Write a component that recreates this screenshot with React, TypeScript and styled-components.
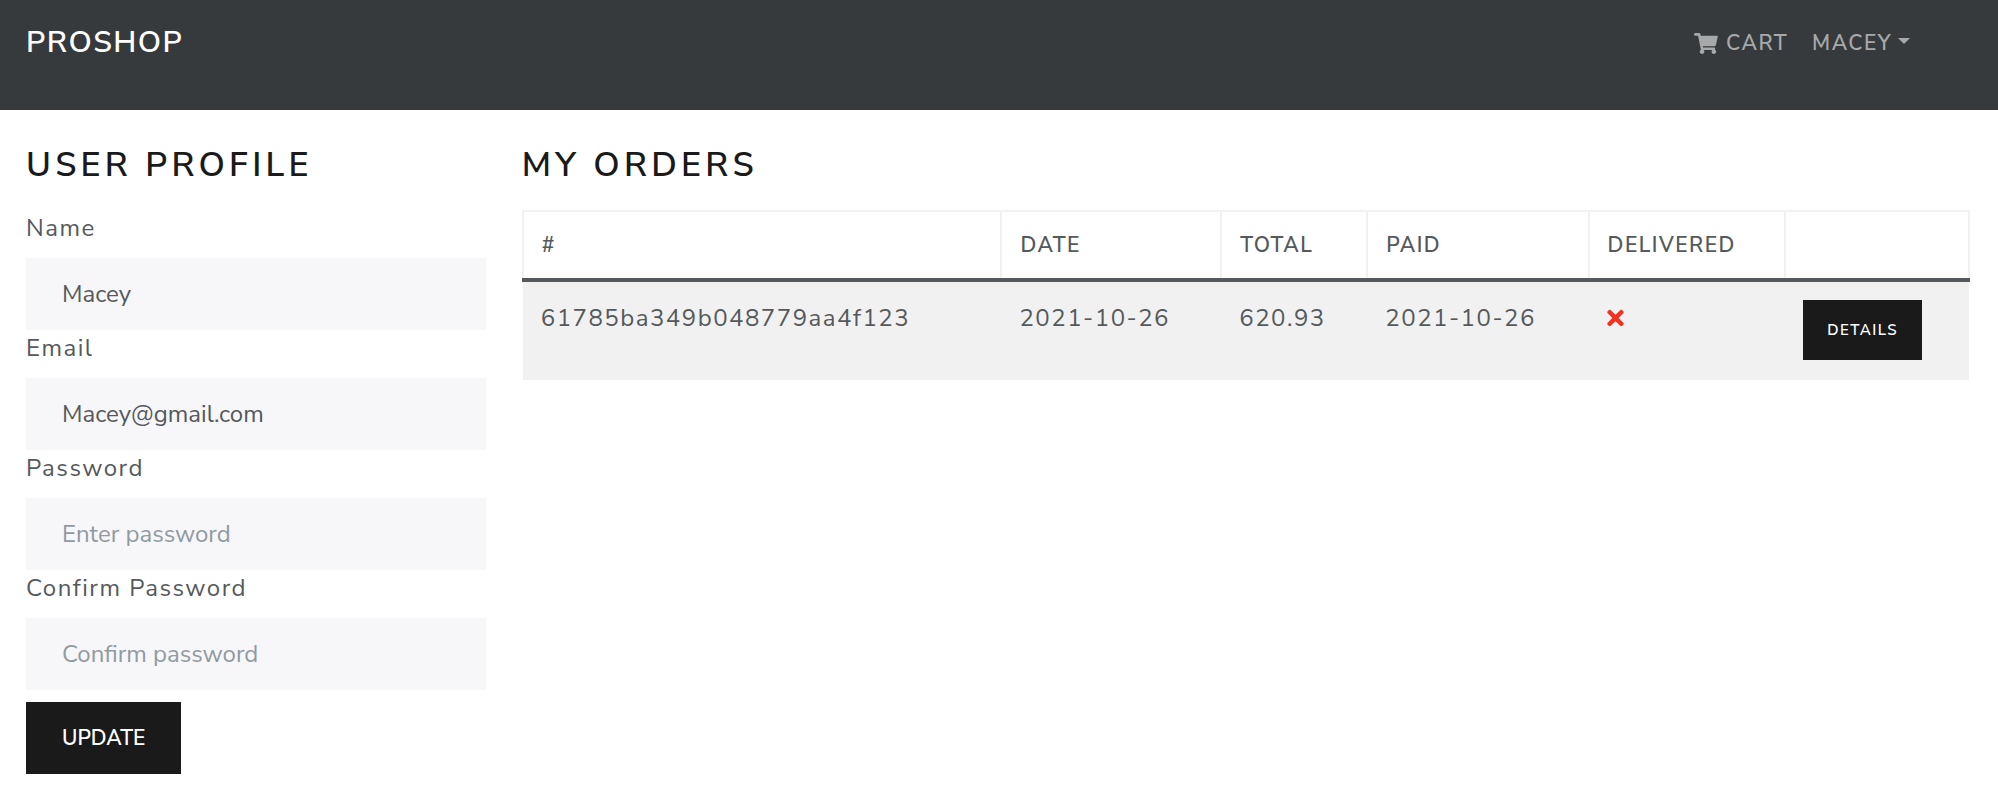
import React from 'react';
import styled, { createGlobalStyle } from 'styled-components';
import { FaShoppingCart, FaTimes } from 'react-icons/fa';

const GlobalStyle = createGlobalStyle`
  *, *::before, *::after { box-sizing: border-box; }
  body {
    margin: 0;
    background: #fff;
    color: #55595c;
    font-family: 'Nunito Sans', Nunito, Lato, sans-serif;
    font-size: 24px;
    line-height: 36px;
    letter-spacing: 0.0625em;
  }
`;

const Navbar = styled.header`
  display: flex;
  justify-content: space-between;
  align-items: flex-start;
  min-height: 110px;
  padding: 25px 88px 0 26px;
  background: #363a3d;
`;

const Brand = styled.a`
  color: #fff;
  font-size: 30px;
  font-weight: 600;
  text-decoration: none;
  text-transform: uppercase;
`;

const NavLinks = styled.nav`
  display: flex;
  gap: 24px;
`;

const navItem = `
  display: flex;
  align-items: center;
  padding: 0;
  border: 0;
  background: none;
  color: #a6a8a9;
  font-family: inherit;
  font-size: 21px;
  font-weight: 600;
  line-height: 36px;
  letter-spacing: inherit;
  text-decoration: none;
  text-transform: uppercase;
  cursor: pointer;
`;

const NavLink = styled.a`
  ${navItem}
  gap: 8px;
`;

const NavToggle = styled.button`
  ${navItem}
  gap: 6px;
`;

const CartIcon = styled(FaShoppingCart)`
  width: 24px;
  height: 21px;
`;

const Caret = styled.span`
  margin-bottom: 4px;
  border-top: 6px solid currentColor;
  border-right: 6px solid transparent;
  border-left: 6px solid transparent;
`;

const Content = styled.main`
  display: grid;
  grid-template-columns: 1fr 3.15fr;
  gap: 36px;
  padding: 33px 28px 30px 26px;
`;

const Column = styled.section`
  min-width: 0;
`;

const Heading = styled.h2`
  margin: 0 0 23px;
  color: #1a1a1a;
  font-size: 34px;
  font-weight: 600;
  line-height: 44px;
  letter-spacing: 0.125em;
  text-transform: uppercase;
`;

const Form = styled.form`
  display: flex;
  flex-direction: column;
  align-items: flex-start;
`;

const Field = styled.div`
  width: 100%;
`;

const Label = styled.label`
  display: block;
  margin-bottom: 12px;
`;

const Input = styled.input`
  display: block;
  width: 100%;
  height: 72px;
  padding: 0 36px;
  border: 0;
  border-radius: 0;
  background: #f7f7f9;
  color: #55595c;
  font: inherit;
  letter-spacing: normal;
  &::placeholder { color: #919aa1; opacity: 1; }
`;

const Button = styled.button<{ $small?: boolean }>`
  display: block;
  height: ${p => (p.$small ? 60 : 72)}px;
  padding: 0 ${p => (p.$small ? 24 : 36)}px;
  border: 0;
  background: #1a1a1a;
  color: #fff;
  font-family: inherit;
  font-size: ${p => (p.$small ? 15 : 21)}px;
  font-weight: 600;
  letter-spacing: ${p => (p.$small ? 'inherit' : 'normal')};
  text-transform: uppercase;
  cursor: pointer;
`;

const FormAction = styled.div`
  margin-top: 12px;
`;

const Table = styled.table`
  width: 100%;
  border-collapse: collapse;
  table-layout: fixed;
`;

const Col = styled.col<{ $width: string }>`
  width: ${p => p.$width};
`;

const HeadCell = styled.th`
  height: 69px;
  padding: 0 18px;
  border: 2px solid #f1f1f1;
  border-bottom: 4px solid #55595c;
  font-size: 21px;
  font-weight: 600;
  text-align: left;
`;

const Row = styled.tr`
  background: #f1f1f1;
`;

const Cell = styled.td`
  height: 100px;
  padding: 18px;
  vertical-align: top;
`;

const Cross = styled(FaTimes)`
  display: block;
  width: 17px;
  height: 24px;
  margin-top: 6px;
  color: #f03322;
`;

const fields = [
  { id: 'name', label: 'Name', type: 'text', value: 'Macey', placeholder: 'Enter name' },
  { id: 'email', label: 'Email', type: 'email', value: 'Macey@gmail.com', placeholder: 'Enter email' },
  { id: 'password', label: 'Password', type: 'password', value: '', placeholder: 'Enter password' },
  { id: 'confirm', label: 'Confirm Password', type: 'password', value: '', placeholder: 'Confirm password' },
];

const columns = [
  { title: '#', width: '33.1%' },
  { title: 'DATE', width: '15.2%' },
  { title: 'TOTAL', width: '10.1%' },
  { title: 'PAID', width: '15.3%' },
  { title: 'DELIVERED', width: '13.6%' },
  { title: '', width: '12.7%' },
];

const orders = [
  { id: '61785ba349b048779aa4f123', date: '2021-10-26', total: '620.93', paid: '2021-10-26' },
];

export default function App() {
  return (
    <>
      <GlobalStyle />
      <Navbar>
        <Brand href="#">ProShop</Brand>
        <NavLinks>
          <NavLink href="#cart"><CartIcon />Cart</NavLink>
          <NavToggle type="button" aria-haspopup="menu">Macey<Caret /></NavToggle>
        </NavLinks>
      </Navbar>
      <Content>
        <Column>
          <Heading>User Profile</Heading>
          <Form onSubmit={e => e.preventDefault()}>
            {fields.map(f => (
              <Field key={f.id}>
                <Label htmlFor={f.id}>{f.label}</Label>
                <Input id={f.id} type={f.type} defaultValue={f.value} placeholder={f.placeholder} />
              </Field>
            ))}
            <FormAction>
              <Button type="submit">Update</Button>
            </FormAction>
          </Form>
        </Column>
        <Column>
          <Heading>My Orders</Heading>
          <Table>
            <colgroup>
              {columns.map(c => <Col key={c.title} $width={c.width} />)}
            </colgroup>
            <thead>
              <tr>{columns.map(c => <HeadCell key={c.title} scope="col">{c.title}</HeadCell>)}</tr>
            </thead>
            <tbody>
              {orders.map(o => (
                <Row key={o.id}>
                  <Cell>{o.id}</Cell>
                  <Cell>{o.date}</Cell>
                  <Cell>{o.total}</Cell>
                  <Cell>{o.paid}</Cell>
                  <Cell><Cross aria-label="Not delivered" /></Cell>
                  <Cell><Button type="button" $small>Details</Button></Cell>
                </Row>
              ))}
            </tbody>
          </Table>
        </Column>
      </Content>
    </>
  );
}
